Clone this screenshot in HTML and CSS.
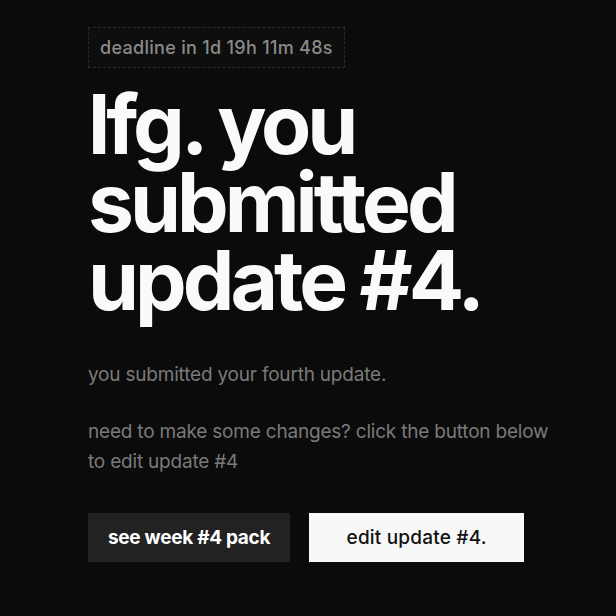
FILE: index.html
```html
<!DOCTYPE html>
<html lang="en">
  <head>
    <meta charset="UTF-8" />
    <meta name="viewport" content="width=device-width, initial-scale=1.0" />
    <title>update submitted</title>
    <link rel="stylesheet" href="styles.css">
  </head>
  <body>
    <main class="page">
      <div class="deadline">deadline in 1d 19h 11m 48s</div>

      <h1 class="headline">lfg. you submitted update #4.</h1>

      <p class="note">you submitted your fourth update.</p>
      <p class="note">need to make some changes? click the button below to edit update #4</p>

      <div class="actions">
        <button class="btn btn-dark">see week #4 pack</button>
        <button class="btn btn-light">edit update #4.</button>
      </div>
    </main>
  </body>
</html>
```

FILE: styles.css
```css
* {
  box-sizing: border-box;
}

body {
  margin: 0;
  background: #0b0b0b;
  color: #fff;
  font-family: Inter, "Noto Sans", sans-serif;
  min-height: 100vh;
}

.page {
  padding: 27px 40px 0 88px;
}

.deadline {
  display: inline-block;
  padding: 9px 11px;
  border: 1px dashed #2a2a2a;
  background: #0e0e0e;
  color: #8a8a8a;
  font-size: 18px;
  line-height: 21px;
  font-weight: 500;
  letter-spacing: 0.3px;
}

.headline {
  margin: 18px 0 0;
  font-size: 82px;
  font-weight: 700;
  line-height: 78px;
  letter-spacing: -4px;
  color: #fafafa;
}

.note {
  max-width: 472px;
  margin: 40px 0 0;
  color: #7a7a7a;
  font-size: 19px;
  line-height: 30px;
  letter-spacing: -0.2px;
}

.note + .note {
  margin-top: 27px;
}

.actions {
  display: flex;
  gap: 19px;
  margin-top: 36px;
}

.btn {
  height: 49px;
  padding: 0 20px;
  border: none;
  border-radius: 0;
  font-family: inherit;
  font-size: 19px;
  cursor: pointer;
}

.btn-dark {
  background: #222;
  color: #fff;
  font-weight: 700;
  letter-spacing: -0.3px;
}

.btn-light {
  width: 215px;
  background: #f8f8f8;
  color: #111;
  font-weight: 500;
  letter-spacing: 0.2px;
}
```
